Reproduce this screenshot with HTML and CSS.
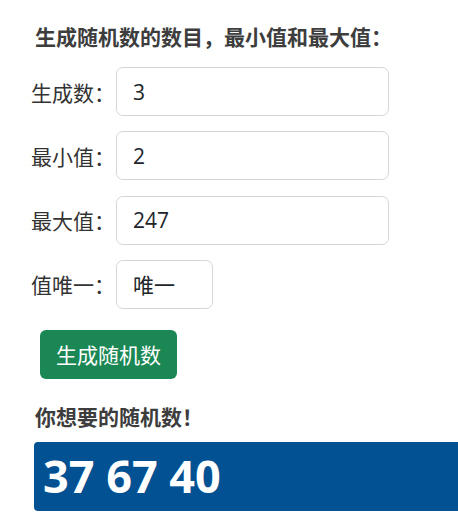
FILE: index.html
```html
<!DOCTYPE html>
<html lang="zh">
<head>
<meta charset="utf-8">
<title>随机数</title>
<link rel="stylesheet" href="styles.css">
</head>
<body>
<div class="app">
  <h3 class="title">生成随机数的数目，最小值和最大值：</h3>
  <div class="row"><label class="lbl">生成数：</label><input class="field" type="text" value="3"></div>
  <div class="row"><label class="lbl">最小值：</label><input class="field" type="text" value="2"></div>
  <div class="row"><label class="lbl">最大值：</label><input class="field" type="text" value="247"></div>
  <div class="row"><label class="lbl">值唯一：</label><input class="field field-small" type="text" value="唯一"></div>
  <button class="btn" type="button">生成随机数</button>
  <h3 class="subtitle">你想要的随机数！</h3>
  <div class="result">37 67 40</div>
</div>
</body>
</html>
```

FILE: styles.css
```css
html, body {
  margin: 0;
  padding: 0;
  overflow: hidden;
  background: #fff;
}

.app {
  font-family: "Open Sans", "Noto Sans CJK SC", sans-serif;
  color: #333;
  padding-top: 24px;
}

.title {
  margin: 0 0 18px 35px;
  font-family: "Noto Sans CJK SC", sans-serif;
  font-size: 21px;
  line-height: 25px;
  font-weight: 700;
  color: #3d3d3d;
}

.row {
  display: flex;
  align-items: center;
  height: 49px;
  margin: 0 0 15.33px 31px;
}

.lbl {
  font-family: "Noto Sans CJK SC", sans-serif;
  font-size: 21px;
  width: 85px;
  color: #333;
}

.field {
  box-sizing: border-box;
  width: 273px;
  height: 49px;
  border: 1px solid #d3d7dc;
  border-radius: 7px;
  padding: 0 16px;
  font-family: "Open Sans", "Noto Sans CJK SC", sans-serif;
  font-size: 21px;
  color: #212529;
  background: #fff;
  outline: none;
}

.field-small {
  width: 97px;
}

.btn {
  display: block;
  box-sizing: border-box;
  margin: 21px 0 0 40px;
  width: 137px;
  height: 49px;
  border: none;
  border-radius: 6px;
  background: #1b8754;
  color: #fff;
  font-family: "Noto Sans CJK SC", sans-serif;
  font-size: 21px;
  padding: 0;
}

.subtitle {
  margin: 25px 0 13px 35px;
  font-family: "Noto Sans CJK SC", sans-serif;
  font-size: 21px;
  line-height: 25px;
  font-weight: 700;
  color: #3d3d3d;
}

.result {
  margin: 0 0 0 34px;
  height: 69px;
  border-radius: 4px 0 0 4px;
  background: #025192;
  color: #fff;
  font-family: "Open Sans", sans-serif;
  font-weight: 700;
  font-size: 45px;
  line-height: 67px;
  padding-left: 9px;
}
```
